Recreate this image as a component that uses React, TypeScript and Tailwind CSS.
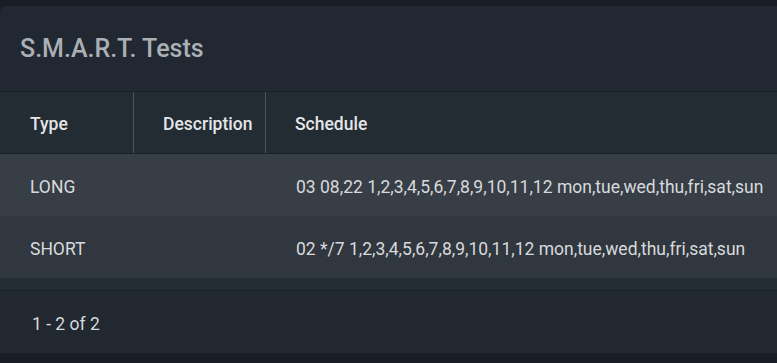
export default function App() {
  const rows = [
    { type: "LONG", description: "", schedule: "03 08,22 1,2,3,4,5,6,7,8,9,10,11,12 mon,tue,wed,thu,fri,sat,sun" },
    { type: "SHORT", description: "", schedule: "02 */7 1,2,3,4,5,6,7,8,9,10,11,12 mon,tue,wed,thu,fri,sat,sun" },
  ];

  return (
    <div className="h-[363px] w-[777px] overflow-hidden bg-[#181e25] pt-[6px] font-['Roboto',sans-serif]">
      <div className="w-[777px] overflow-hidden rounded-tl-md bg-[#212831]">
        {/* title */}
        <div className="flex h-[86px] items-center border-b border-[#1a2027] px-5">
          <h2 className="text-[25px] font-medium text-[#aab0b5]">S.M.A.R.T. Tests</h2>
        </div>

        {/* table */}
        <div className="bg-[#232b33]">
          <div className="flex h-[62px] border-b border-[#1b2128] text-[17.5px] font-medium text-[#e3e5e7]">
            <div className="flex w-[134px] items-center border-r border-[#49535d] pl-[30px] pt-[4px]">Type</div>
            <div className="flex w-[132px] items-center border-r border-[#49535d] pl-[29px] pt-[4px]">Description</div>
            <div className="flex flex-1 items-center pl-[29px] pt-[4px]">Schedule</div>
          </div>
          {rows.map((row, i) => (
            <div
              key={row.type}
              className={`flex h-[62px] items-center pt-[4px] text-[17.5px] text-[#d7dadd] ${i === 0 ? "bg-[#383e45]" : "bg-[#31373e]"}`}
            >
              <div className="w-[134px] pl-[30px]">{row.type}</div>
              <div className="w-[132px]">{row.description}</div>
              <div className="flex-1 whitespace-nowrap pl-[30px]">{row.schedule}</div>
            </div>
          ))}
          <div className="h-[13px] border-b border-[#1a2027]" />
        </div>

        {/* footer */}
        <div className="flex h-[62px] items-center bg-[#212830] pl-[32px] pt-[4px] text-[17.5px] text-[#d7dadd]">1 - 2 of 2</div>
      </div>
    </div>
  );
}
